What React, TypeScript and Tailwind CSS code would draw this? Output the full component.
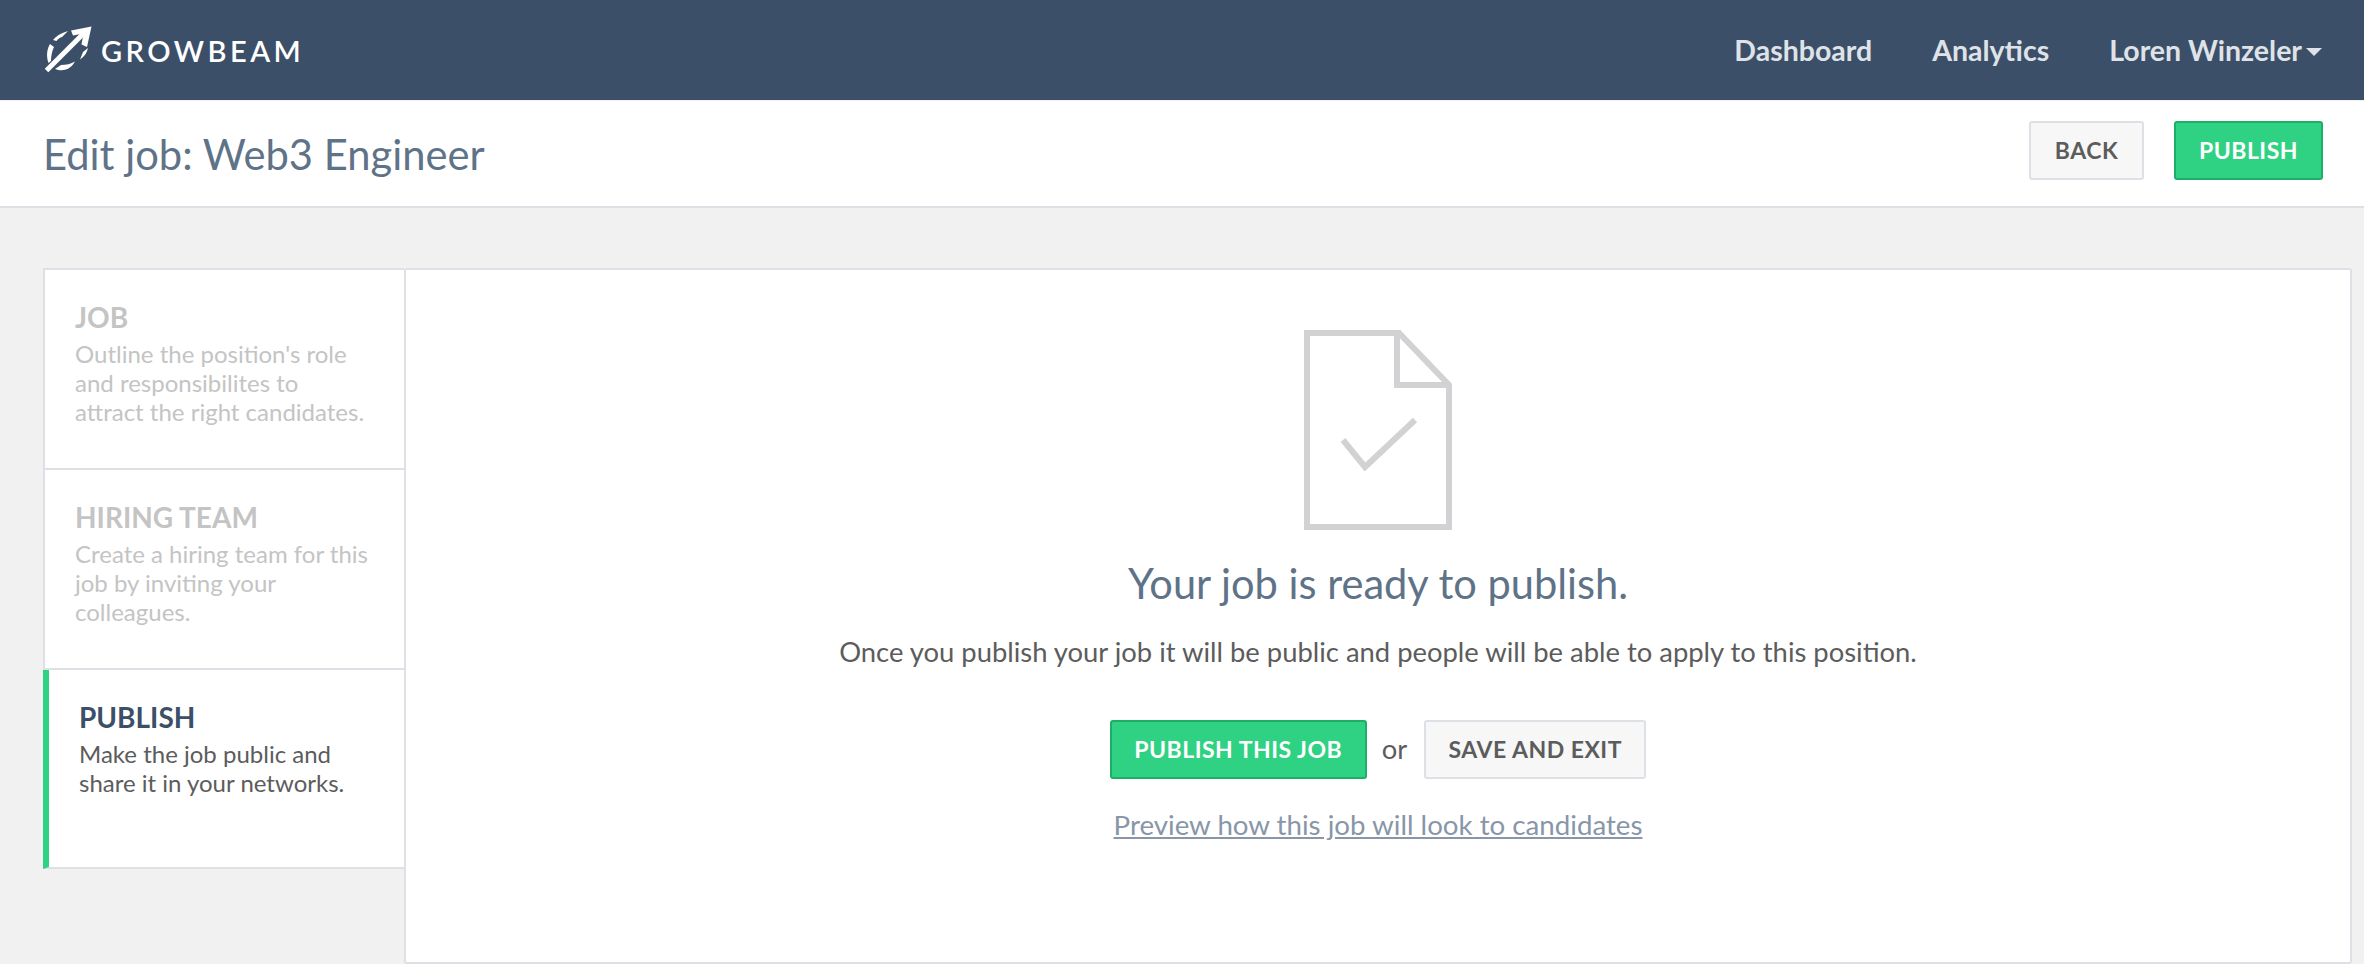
function Logo() {
  return (
    <svg viewBox="0 0 48 48" className="h-[48px] w-[48px]" fill="none" aria-hidden="true">
      <path d="M2.5 44.5L41 6" stroke="#fff" strokeWidth="5" />
      <path d="M47.5 0.5L27 4.5L29 9.5L39.5 7.5L37.5 18.5L43 21Z" fill="#fff" />
      <path d="M9 14C12 10 17 7 24 5L18 11C16 11.5 14 13 12.5 15Z" fill="#fff" />
      <path d="M6 18L10 21C8 25 7 30 7 35L4.5 37C2 30 3 23 6 18Z" fill="#fff" />
      <path d="M11 43L17 39C22 39 27 38 31 35.5C28 41 21 47 11 43Z" fill="#fff" />
      <path d="M36 33.5C40 31 43 27 44 22L39 26C38 28.5 37 31 36 33.5Z" fill="#fff" />
    </svg>
  );
}

function Step({
  title,
  text,
  active,
}: {
  title: string;
  text: string[];
  active?: boolean;
}) {
  return (
    <div
      className={
        active
          ? "h-[199px] border-b-2 border-l-[6px] border-[#dde1e6] border-l-[#2fd183] pl-[30px] pt-[25px]"
          : "h-[200px] border-b-2 border-l-2 border-[#dde1e6] pl-[30px] pt-[25px]"
      }
    >
      <div
        className={
          active
            ? "text-[28px] leading-[44px] font-bold text-[#3c4f68]"
            : "text-[28px] leading-[44px] font-bold text-[#c4c4c4]"
        }
      >
        {title}
      </div>
      <div
        className={
          active
            ? "text-[24px] leading-[29px] text-[#5c5c5c]"
            : "text-[24px] leading-[29px] text-[#c4c4c4]"
        }
      >
        {text.map((line) => (
          <div key={line}>{line}</div>
        ))}
      </div>
    </div>
  );
}

export default function App() {
  return (
    <div className="flex h-[964px] flex-col overflow-hidden bg-[#f1f1f1] font-['Lato',sans-serif]">
      <header className="flex h-[100px] shrink-0 items-center justify-between bg-[#3c4f68] pl-[44px] pr-[42px]">
        <div className="flex items-center gap-[9px]">
          <Logo />
          <span className="text-[29px] font-semibold leading-none tracking-[3.5px] text-white">
            GROWBEAM
          </span>
        </div>
        <nav className="flex items-center gap-[60px] text-[28.5px] font-bold text-[#dfe3e8]">
          <a>Dashboard</a>
          <a>Analytics</a>
          <a className="flex items-center gap-[4px]">
            Loren Winzeler
            <span className="mt-[3px] h-0 w-0 border-x-[8px] border-t-[8px] border-x-transparent border-t-[#dfe3e8]" />
          </a>
        </nav>
      </header>

      <div className="mt-px flex h-[107px] shrink-0 items-center justify-between border-b-2 border-[#dde1e6] bg-white pl-[43px] pr-[41px]">
        <h1 className="mt-[2px] text-[41.7px] leading-none text-[#5f7388]">Edit job: Web3 Engineer</h1>
        <div className="mb-[6px] flex gap-[30px]">
          <button className="h-[59px] w-[115px] rounded-[3px] border-2 border-[#dde1e6] bg-[#f7f7f7] text-[23px] font-bold tracking-[0.5px] text-[#5c5c5c]">
            BACK
          </button>
          <button className="h-[59px] w-[149px] rounded-[3px] border-2 border-[#1fae68] bg-[#2fd183] text-[23px] font-bold tracking-[0.5px] text-white">
            PUBLISH
          </button>
        </div>
      </div>

      <div className="flex min-h-0 flex-1 items-start pl-[43px] pr-[12px] pt-[60px]">
        <aside className="w-[361px] shrink-0 border-t-2 border-[#dde1e6] bg-white">
          <Step
            title="JOB"
            text={["Outline the position's role", "and responsibilites to", "attract the right candidates."]}
          />
          <Step
            title="HIRING TEAM"
            text={["Create a hiring team for this", "job by inviting your", "colleagues."]}
          />
          <Step
            active
            title="PUBLISH"
            text={["Make the job public and", "share it in your networks."]}
          />
        </aside>

        <main className="flex h-[696px] flex-1 flex-col items-center rounded-[3px] border-2 border-[#dde1e6] bg-white pt-[60px]">
          <svg viewBox="0 0 148 200" className="h-[200px] w-[148px]" fill="none" stroke="#d2d2d4" strokeWidth="6" aria-hidden="true">
            <path d="M3 3H95L145 55V197H3Z" />
            <path d="M93 3V55H145" />
            <path d="M39 110L61 137L111 90" />
          </svg>
          <h2 className="mt-[28px] text-[41.6px] leading-[50px] text-[#5f7388]">Your job is ready to publish.</h2>
          <p className="mt-[26px] text-[27.4px] leading-[36px] text-[#5c5c5c]">
            Once you publish your job it will be public and people will be able to apply to this position.
          </p>
          <div className="mt-[50px] flex items-center">
            <button className="h-[59px] w-[257px] rounded-[3px] border-2 border-[#1fae68] bg-[#2fd183] text-[23px] font-bold tracking-[0.5px] text-white">
              PUBLISH THIS JOB
            </button>
            <span className="mb-[2px] ml-[15px] mr-[17px] text-[27.4px] text-[#5c5c5c]">or</span>
            <button className="h-[59px] w-[222px] rounded-[3px] border-2 border-[#dde1e6] bg-[#f7f7f7] text-[23px] font-bold tracking-[0.5px] text-[#5c5c5c]">
              SAVE AND EXIT
            </button>
          </div>
          <a className="mt-[28px] text-[27.7px] leading-[36px] text-[#8896a8] underline">
            Preview how this job will look to candidates
          </a>
        </main>
      </div>
    </div>
  );
}
